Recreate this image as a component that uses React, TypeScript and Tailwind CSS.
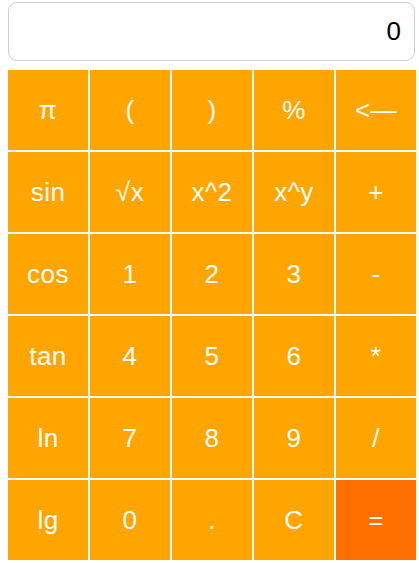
import React, { useState } from 'react';

const KEYS = [
  'π', '(', ')', '%', '<—',
  'sin', '√x', 'x^2', 'x^y', '+',
  'cos', '1', '2', '3', '-',
  'tan', '4', '5', '6', '*',
  'ln', '7', '8', '9', '/',
  'lg', '0', '.', 'C', '=',
];

export default function App() {
  const [display, setDisplay] = useState('0');

  const press = (k: string) => {
    if (k === 'C') return setDisplay('0');
    if (k === '<—') return setDisplay(d => (d.length > 1 ? d.slice(0, -1) : '0'));
    if (k === '=') return;
    setDisplay(d => (d === '0' ? k : d + k));
  };

  return (
    <div className="w-[419px] h-[563px] bg-white font-['Liberation_Sans',Arial,sans-serif] pl-2 pt-[2px]">
      {/* Display */}
      <div className="w-[407px] h-[59px] border border-[#cfcfcf] rounded-[9px] flex items-center justify-end pr-[13px] text-[26px] text-black">
        {display}
      </div>

      {/* Keypad */}
      <div className="mt-[9px] grid grid-cols-[repeat(5,80px)] grid-rows-[repeat(6,80px)] gap-[2px]">
        {KEYS.map(k => (
          <button
            key={k}
            onClick={() => press(k)}
            className={`flex items-center justify-center text-white text-[26px] tracking-[0.5px] ${
              k === '=' ? 'bg-[#ff6f00]' : 'bg-[#ffa500]'
            }`}
          >
            {k}
          </button>
        ))}
      </div>
    </div>
  );
}
